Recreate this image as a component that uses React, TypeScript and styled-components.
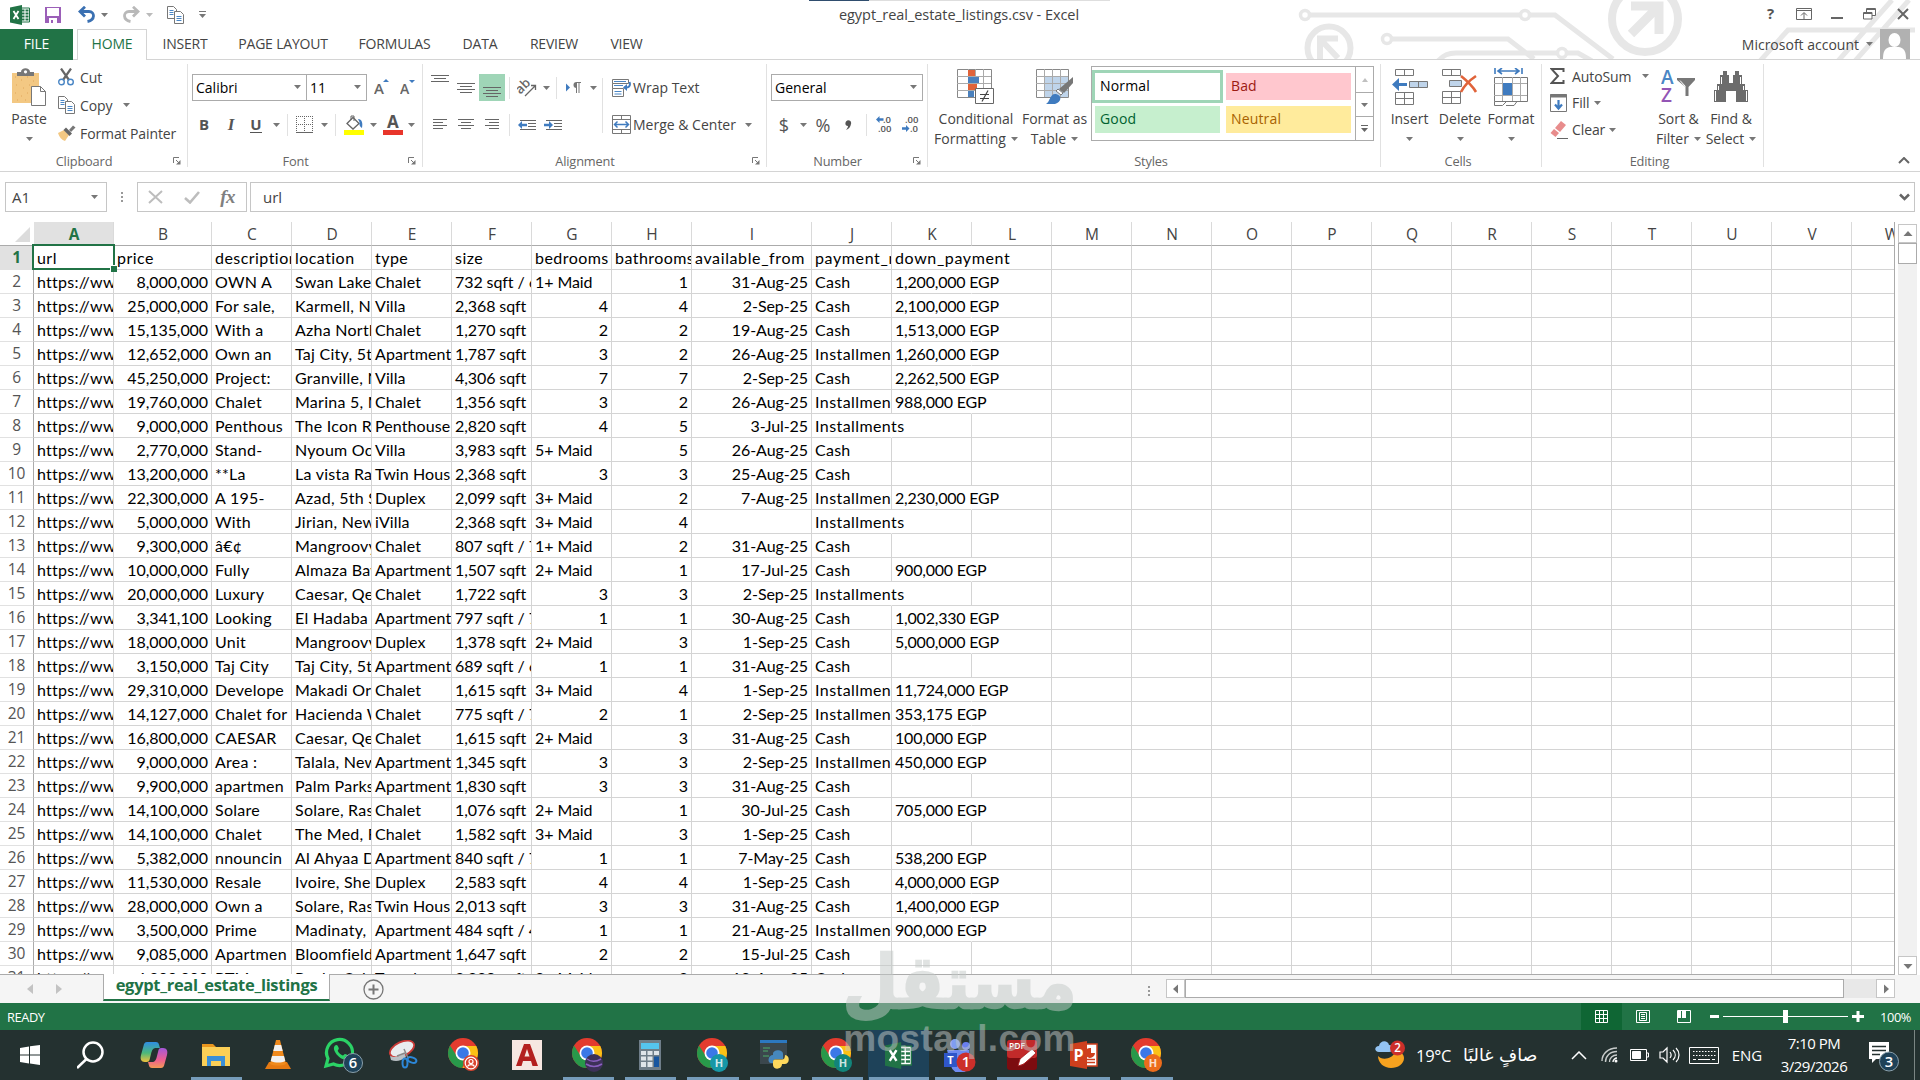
import { ReactNode } from 'react';
import styled, { createGlobalStyle } from 'styled-components';

const GlobalStyle = createGlobalStyle`
  * {
    box-sizing: border-box;
  }
  body {
    margin: 0;
    background: #fff;
    font-family: 'Open Sans', 'Noto Sans', sans-serif;
    font-size: 14px;
    color: #444;
    overflow: hidden;
  }
  svg {
    display: block;
    flex: none;
  }
`;

const Window = styled.div`
  position: relative;
  width: 1920px;
  height: 1080px;
  display: flex;
  flex-direction: column;
  overflow: hidden;
  background: #fff;
`;

/* ---------- title bar and tabs ---------- */

const Header = styled.header`
  position: relative;
  height: 60px;
  flex: none;
  display: flex;
  flex-direction: column;
  border-bottom: 1px solid #d4d4d4;
`;
const Circuit = styled.svg`
  position: absolute;
  right: 0;
  top: 0;
`;
const TopStrip = styled.div`
  position: absolute;
  left: 809px;
  top: 0;
  width: 301px;
  height: 1px;
  background: linear-gradient(90deg, #2f4d6e 60px, #dedede 60px);
`;
const TitleBar = styled.div`
  position: relative;
  height: 29px;
  display: flex;
  align-items: center;
  padding-left: 8px;
`;
const Title = styled.div`
  width: 300px;
  margin-left: 597px;
  text-align: center;
  font-size: 14.5px;
  line-height: 29px;
  letter-spacing: -0.05px;
`;
const WindowButtons = styled.div`
  display: flex;
  align-items: center;
  margin-left: auto;
  padding: 0 1px 2px 0;
`;
const Slot = styled.div<{ $w: number; $bg?: string }>`
  width: ${props => props.$w}px;
  height: 100%;
  flex: none;
  display: flex;
  align-items: center;
  justify-content: center;
  background: ${props => props.$bg || 'transparent'};
`;
const TabBar = styled.nav`
  position: relative;
  height: 31px;
  display: flex;
`;
const FileTab = styled.div`
  width: 73px;
  height: 31px;
  line-height: 30px;
  background: #217346;
  color: #fff;
  text-align: center;
  letter-spacing: -0.2px;
`;
const Tab = styled.div<{ $w: number; $active?: boolean }>`
  width: ${props => props.$w}px;
  height: 31px;
  line-height: 28px;
  text-align: center;
  letter-spacing: -0.2px;
  color: ${props => (props.$active ? '#217346' : '#444')};
  background: ${props => (props.$active ? '#fff' : 'transparent')};
  border: ${props => (props.$active ? '1px solid #d4d4d4' : '1px solid transparent')};
  border-bottom: 0;
  margin-left: ${props => (props.$active ? '4px' : '0')};
`;
const Account = styled.div`
  margin-left: auto;
  display: flex;
  align-items: center;
  gap: 7px;
  padding: 0 10px 1px 0;
`;

/* ---------- ribbon ---------- */

const Ribbon = styled.section`
  height: 112px;
  flex: none;
  display: flex;
  padding: 4px 0;
  border-bottom: 1px solid #d4d4d4;
`;
const Group = styled.div<{ $w: number }>`
  width: ${props => props.$w}px;
  height: 103px;
  flex: none;
  display: flex;
  flex-direction: column;
  border-right: 1px solid #e1e1e1;
`;
const GroupBody = styled.div<{ $left?: number }>`
  height: 91px;
  display: flex;
  padding-left: ${props => props.$left || 0}px;
`;
const GroupFooter = styled.div`
  height: 12px;
  display: flex;
  align-items: center;
  gap: 5px;
  padding-right: 6px;
  font-size: 12.8px;
  line-height: 13px;
  color: #666;
`;
const GroupName = styled.span`
  flex: 1;
  text-align: center;
  letter-spacing: -0.15px;
`;
const BigButton = styled.div<{ $w: number }>`
  width: ${props => props.$w}px;
  flex: none;
  display: flex;
  flex-direction: column;
  align-items: center;
  line-height: 20px;
  white-space: nowrap;
`;
const BigIcon = styled.div`
  height: 45px;
  display: flex;
  align-items: center;
`;
const BigLine = styled.div`
  height: 20px;
  display: flex;
  align-items: center;
  gap: 5px;
`;
const SmallColumn = styled.div<{ $w: number }>`
  width: ${props => props.$w}px;
  flex: none;
`;
const SmallButton = styled.div<{ $h: number }>`
  height: ${props => props.$h}px;
  display: flex;
  align-items: center;
  padding-bottom: 2px;
  white-space: nowrap;
  letter-spacing: -0.1px;
`;
const SmallIcon = styled.div`
  width: 22px;
  flex: none;
`;
const CaretBox = styled.div<{ $ml: number }>`
  margin-left: ${props => props.$ml}px;
`;
const Rows = styled.div`
  display: flex;
  flex-direction: column;
  gap: 10px;
  padding-top: 10px;
`;
const Row = styled.div`
  height: 27px;
  display: flex;
  align-items: center;
  white-space: nowrap;
`;
const Combo = styled.div<{ $w: number }>`
  width: ${props => props.$w}px;
  height: 27px;
  flex: none;
  display: flex;
  align-items: center;
  justify-content: space-between;
  padding: 0 5px 1px 3px;
  border: 1px solid #ababab;
  color: #000;
  & + & {
    margin-left: -1px;
  }
`;
const Line = styled.div`
  width: 1px;
  height: 22px;
  flex: none;
  background: #e1e1e1;
`;
const TallLine = styled.div`
  width: 1px;
  height: 55px;
  flex: none;
  margin: 14px 6px 0 7px;
  background: #e1e1e1;
`;
const Glyph = styled.span<{ $size: number; $italic?: boolean; $underline?: boolean }>`
  font-size: ${props => props.$size}px;
  font-weight: 700;
  line-height: 1;
  color: #555;
  font-style: ${props => (props.$italic ? 'italic' : 'normal')};
  font-family: ${props =>
    props.$italic ? "'Liberation Serif', serif" : "'Open Sans', sans-serif"};
  border-bottom: ${props => (props.$underline ? '1px solid #555' : '0')};
`;
const Sign = styled.span<{ $size: number }>`
  font-size: ${props => props.$size}px;
  line-height: 1;
  color: #555;
`;
const Gallery = styled.div`
  width: 283px;
  height: 75px;
  margin-top: 2px;
  display: flex;
  border: 1px solid #ababab;
`;
const Swatches = styled.div`
  width: 263px;
  display: grid;
  grid-template-columns: 125px 125px;
  grid-template-rows: 27px 27px;
  gap: 6px;
  padding: 6px 0 0 3px;
`;
const Swatch = styled.div<{ $bg: string; $fg: string; $on?: boolean }>`
  background: ${props => props.$bg};
  color: ${props => props.$fg};
  box-shadow: ${props => (props.$on ? '0 0 0 3px #9fd5b7' : 'none')};
  padding-left: 5px;
  line-height: 26px;
  letter-spacing: 0.15px;
`;
const GalleryButtons = styled.div`
  width: 18px;
  display: flex;
  flex-direction: column;
  border-left: 1px solid #ababab;
`;
const GalleryButton = styled.div<{ $h: number }>`
  height: ${props => props.$h}px;
  display: flex;
  align-items: center;
  justify-content: center;
  & + & {
    border-top: 1px solid #ababab;
  }
`;
const Collapse = styled.div`
  margin-left: auto;
  align-self: flex-end;
  padding: 0 10px 3px 0;
`;

/* ---------- formula bar ---------- */

const FormulaBar = styled.section`
  height: 50px;
  flex: none;
  display: flex;
  align-items: flex-start;
  padding: 10px 5px 0;
  font-size: 15px;
`;
const Box = styled.div<{ $w?: number }>`
  width: ${props => (props.$w ? `${props.$w}px` : 'auto')};
  flex: ${props => (props.$w ? 'none' : 1)};
  height: 30px;
  display: flex;
  align-items: center;
  justify-content: space-between;
  border: 1px solid #c6c6c6;
  padding: 0 8px 1px 6px;
`;
const FormulaButtons = styled(Box)`
  padding: 0 11px 0 10px;
`;
const FormulaInput = styled(Box)`
  margin-left: 3px;
  padding: 0 4px 1px 12px;
`;
const Dots = styled.div`
  width: 30px;
  height: 30px;
  display: flex;
  align-items: center;
  justify-content: center;
`;
const Fx = styled.span`
  font: italic 700 19px 'Liberation Serif', serif;
  color: #808080;
  letter-spacing: -0.5px;
`;

/* ---------- sheet ---------- */

const SheetArea = styled.section`
  height: 753px;
  flex: none;
  display: flex;
  background: #fff;
`;
const Sheet = styled.div`
  width: 1895px;
  height: 753px;
  overflow: hidden;
  border-right: 1px solid #ababab;
  border-bottom: 1px solid #ababab;
`;
const SheetRow = styled.div`
  width: 1960px;
  height: 24px;
  display: flex;
`;
const Corner = styled.div`
  width: 34px;
  height: 24px;
  flex: none;
  display: flex;
  align-items: flex-end;
  justify-content: flex-end;
  padding: 0 4px 3px 0;
  border-bottom: 1px solid #ababab;
`;
const ColumnName = styled.div<{ $w: number; $on?: boolean }>`
  width: ${props => props.$w}px;
  height: 24px;
  flex: none;
  padding-left: 1px;
  text-align: center;
  font-size: 15.5px;
  line-height: 24px;
  font-weight: ${props => (props.$on ? 700 : 400)};
  color: ${props => (props.$on ? '#217346' : '#444')};
  background: ${props => (props.$on ? '#e1e1e1' : '#fff')};
  border-right: 1px solid #dadada;
  border-bottom: 1px solid #ababab;
`;
const RowNumber = styled.div<{ $on?: boolean }>`
  width: 34px;
  height: 24px;
  flex: none;
  text-align: center;
  font-size: 15.5px;
  line-height: 23px;
  letter-spacing: -0.2px;
  font-weight: ${props => (props.$on ? 700 : 400)};
  color: ${props => (props.$on ? '#217346' : '#555')};
  background: ${props => (props.$on ? '#e1e1e1' : '#fff')};
  border-right: 1px solid #ababab;
  border-bottom: 1px solid #e1e1e1;
`;
const Cell = styled.div<{ $w: number; $track: number; $right?: boolean; $spill?: boolean }>`
  width: ${props => props.$w}px;
  height: 24px;
  flex: none;
  padding: 0 3px;
  font-family: Lato, 'Open Sans', sans-serif;
  font-size: 16px;
  line-height: 24px;
  letter-spacing: ${props => props.$track}px;
  color: #000;
  white-space: pre;
  text-align: ${props => (props.$right ? 'right' : 'left')};
  overflow: ${props => (props.$spill ? 'visible' : 'hidden')};
  border-right: 1px solid ${props => (props.$spill ? 'transparent' : '#d4d4d4')};
  border-bottom: 1px solid #d4d4d4;
`;
const Selection = styled.div`
  position: absolute;
  left: 32px;
  top: 244px;
  width: 83px;
  height: 26px;
  border: 2px solid #217346;
  &::after {
    content: '';
    position: absolute;
    right: -4px;
    bottom: -4px;
    width: 6px;
    height: 6px;
    background: #217346;
    border: 1px solid #fff;
    border-right: 0;
    border-bottom: 0;
  }
`;
const VScroll = styled.div`
  width: 19px;
  height: 751px;
  margin: 2px 0 0 3px;
  display: flex;
  flex-direction: column;
  background: #f1f1f1;
`;
const ScrollButton = styled.div`
  width: 19px;
  height: 19px;
  flex: none;
  display: flex;
  align-items: center;
  justify-content: center;
  background: #fff;
  border: 1px solid #c6c6c6;
`;
const VThumb = styled.div`
  height: 21px;
  margin-bottom: auto;
  background: #fff;
  border: 1px solid #ababab;
`;

const SheetTabs = styled.section`
  height: 28px;
  flex: none;
  display: flex;
  background: #f5f5f5;
`;
const SheetNav = styled.div`
  width: 103px;
  display: flex;
  align-items: center;
  gap: 23px;
  padding-left: 27px;
`;
const SheetTab = styled.div`
  width: 227px;
  height: 27px;
  margin-top: -1px;
  background: #fff;
  border: 1px solid #ababab;
  border-top: 0;
  border-bottom: 2px solid #217346;
  color: #217346;
  font-size: 16.5px;
  font-weight: 700;
  line-height: 22px;
  text-align: center;
  letter-spacing: -0.3px;
`;
const AddSheet = styled.div`
  padding: 4px 0 0 33px;
`;
const HScroll = styled.div`
  margin-left: auto;
  padding: 4px 25px 0 0;
  display: flex;
`;
const HThumb = styled.div`
  width: 659px;
  height: 19px;
  background: #fff;
  border: 1px solid #ababab;
`;
const HTrack = styled.div`
  width: 32px;
  height: 19px;
  background: #e8e8e8;
`;

/* ---------- status bar ---------- */

const StatusBar = styled.footer`
  height: 27px;
  flex: none;
  display: flex;
  align-items: center;
  padding: 0 9px 0 7px;
  background: #217346;
  color: #fff;
  font-size: 12.8px;
  letter-spacing: -0.4px;
`;
const StatusTools = styled.div`
  height: 27px;
  display: flex;
  align-items: center;
  margin-left: auto;
`;
const ZoomValue = styled.span`
  width: 47px;
  text-align: right;
`;

/* ---------- taskbar ---------- */

const Taskbar = styled.footer`
  height: 50px;
  flex: none;
  display: flex;
  background: #243130;
  color: #fff;
`;
const TaskItem = styled.div<{ $w?: number; $active?: boolean; $running?: boolean }>`
  width: ${props => props.$w || 62}px;
  height: 50px;
  flex: none;
  display: flex;
  align-items: center;
  justify-content: center;
  background: ${props =>
    props.$active ? 'linear-gradient(#1e4259, #1e4259) center / 61px 50px no-repeat' : 'none'};
  position: relative;
  &::after {
    content: '';
    display: ${props => (props.$running ? 'block' : 'none')};
    position: absolute;
    bottom: 0;
    left: ${props => (props.$active ? 1 : 6)}px;
    right: ${props => (props.$active ? 0 : 5)}px;
    height: 3px;
    background: #769cba;
  }
`;
const Tray = styled.div`
  margin-left: auto;
  display: flex;
  align-items: center;
  font-size: 15px;
`;
const Weather = styled.div`
  display: flex;
  align-items: center;
  width: 184px;
  white-space: nowrap;
`;
const Temperature = styled.span`
  width: 47px;
  margin-left: 10px;
  font-size: 16.5px;
  letter-spacing: -0.3px;
`;
const Condition = styled.span`
  font-family: 'DejaVu Sans', sans-serif;
  font-size: 17.5px;
  line-height: 24px;
`;
const Clock = styled.div`
  width: 100px;
  text-align: center;
  font-size: 15px;
  line-height: 23px;
  letter-spacing: -0.5px;
`;
const Notifications = styled.div`
  width: 50px;
  padding: 4px 0 0 4px;
`;
const ShowDesktop = styled.div`
  width: 6px;
  height: 50px;
  border-left: 1px solid #7b8583;
`;

const Watermark = styled.div`
  position: absolute;
  left: 845px;
  top: 946px;
  width: 229px;
  height: 110px;
  display: flex;
  flex-direction: column;
  align-items: center;
  color: #c3c9c7;
  opacity: 0.5;
`;
const WatermarkName = styled.div`
  font: 700 64px/74px 'DejaVu Sans', sans-serif;
  white-space: nowrap;
  transform: scale(1, 1.15);
  -webkit-text-stroke: 2px #c3c9c7;
`;
const WatermarkHost = styled.div`
  font: 700 37px/38px 'Liberation Sans', sans-serif;
  letter-spacing: 0.4px;
`;

/* ---------- icons ---------- */

const Caret = ({ color = '#777' }: { color?: string }) => (
  <svg width="7" height="4" viewBox="0 0 7 4">
    <path d="M0 0h7L3.500 4z" fill={color} />
  </svg>
);
const Triangle = ({ dir, color = '#777' }: { dir: number; color?: string }) => (
  <svg width="10" height="10" viewBox="0 0 10 10">
    <path d="M0.500 7h9L5 2z" fill={color} transform={`rotate(${dir} 5 5)`} />
  </svg>
);
const Launcher = () => (
  <svg width="8" height="8" viewBox="0 0 8 8" fill="none" stroke="#777">
    <path d="M0.500 6V0.500H6M3 3l3 3" />
    <path d="M7.500 3v4.500H3z" fill="#777" stroke="none" />
  </svg>
);
const Lines = ({ rows, w = 18, h = 18 }: { rows: number[][]; w?: number; h?: number }) => (
  <svg width={w} height={h} viewBox={`0 0 ${w} ${h}`} fill="#666">
    {rows.map(([x, y, len]) => (
      <rect key={y} x={x} y={y} width={len} height="1" />
    ))}
  </svg>
);
const ExcelIcon = ({ size = 20 }: { size?: number }) => (
  <svg width={size} height={size} viewBox="0 0 20 20">
    <path d="M10 3h9.500v14H10z" fill="#fff" stroke="#217346" />
    <path d="M12 5.500h2.500M15.500 5.500h3M12 8.500h2.500M15.500 8.500h3M12 11.500h2.500M15.500 11.500h3M12 14.500h2.500M15.500 14.500h3" stroke="#217346" strokeWidth="1.800" />
    <path d="M0 2.500 12 0v20L0 17.500z" fill="#217346" />
    <path d="M3.500 6 8.500 14M8.500 6l-5 8" stroke="#fff" strokeWidth="1.800" />
  </svg>
);
const SaveIcon = () => (
  <svg width="16" height="16" viewBox="0 0 16 16">
    <path d="M0 0h16v16H0z" fill="#9b5fb8" />
    <path d="M2 1h12v8H2zM4 11h8v5H4z" fill="#fff" />
    <path d="M6 13h2v3H6z" fill="#9b5fb8" />
  </svg>
);
const UndoIcon = ({ color, flip }: { color: string; flip?: boolean }) => (
  <svg width="18" height="17" viewBox="0 0 18 17" fill="none" stroke={color} strokeWidth="2.800">
    <g transform={flip ? 'translate(18 0) scale(-1 1)' : undefined}>
      <path d="M2 5.500h9c6 0 6.500 8.500-1.500 10" />
      <path d="M7 0.800 2 5.500l5 5" />
    </g>
  </svg>
);
const CopyIcon = () => (
  <svg width="17" height="18" viewBox="0 0 17 18" fill="#fff" stroke="#777">
    <path d="M0.500 0.500h6l3 3v9h-9z" />
    <path d="M2.500 4.500h4M2.500 6.500h4M2.500 8.500h4" stroke="#4a86c5" />
    <path d="M7.500 5.500h6l3 3v9h-9z" />
    <path d="M9.500 10.500h5M9.500 12.500h5M9.500 14.500h5" stroke="#4a86c5" />
  </svg>
);
const PasteIcon = () => (
  <svg width="34" height="38" viewBox="0 0 34 38">
    <path d="M0 5h27v30H0z" fill="#f3c883" />
    <path d="M3 9h1M9 12h1M15 9h1M21 13h1M4 17h1M11 20h1M17 17h1M3 25h1M9 28h1M15 25h1M5 32h1M13 32h1" stroke="#e0a65a" />
    <path d="M5 8V4h4c0-5 9-5 9 0h4v4z" fill="#777" />
    <circle cx="13.500" cy="3.800" r="1.600" fill="#fff" />
    <path d="M19.500 18.500h9l5 5v14h-14z" fill="#fff" stroke="#777" />
    <path d="M28.500 18.500v5h5" fill="none" stroke="#777" />
  </svg>
);
const CutIcon = () => (
  <svg width="16" height="18" viewBox="0 0 16 18" fill="none">
    <path d="M3 0.500 11 12M13 0.500 5 12" stroke="#666" strokeWidth="2.200" />
    <circle cx="3.500" cy="14" r="2.800" stroke="#4a86c5" strokeWidth="1.400" />
    <circle cx="12.500" cy="14" r="2.800" stroke="#4a86c5" strokeWidth="1.400" />
  </svg>
);
const PainterIcon = () => (
  <svg width="18" height="16" viewBox="0 0 18 16">
    <path d="M0 8 6 5l5 5-4 6c-3-1-6-4-7-8z" fill="#f3c883" />
    <path d="M5.500 5 8 2.500l6 6L11.500 11z" fill="#666" />
    <path d="m11 5 4-4.500 2.500 2L13 7z" fill="#777" />
  </svg>
);
const GrowFont = ({ down }: { down?: boolean }) => (
  <svg width="16" height="20" viewBox="0 0 16 20">
    <text x="0" y="16" fontSize={down ? 14 : 15} fontWeight="600" fill="#666" fontFamily="Open Sans">
      A
    </text>
    <path d={down ? 'M9 2h6l-3 3z' : 'M9 4h6l-3-3z'} fill="#3f7bbf" />
  </svg>
);
const BordersIcon = () => (
  <svg width="17" height="17" viewBox="0 0 17 17" fill="none" stroke="#666">
    <path d="M0.500 0v16M16.500 0v16M8.500 0v16M0 0.500h16M0 8.500h16" strokeDasharray="1 1" />
    <path d="M0 16.500h17" />
  </svg>
);
const FillColorIcon = () => (
  <svg width="20" height="20" viewBox="0 0 20 20">
    <path d="m3 8.500 6-6 6 6-6 5.500z" fill="#fff" stroke="#666" strokeWidth="1.300" />
    <path d="M7 5V1h3v5" fill="none" stroke="#666" />
    <path d="M14 4c4 0 5 4 4 9-2-1-3-3-2.500-6z" fill="#3f7bbf" />
    <path d="M0 15h20v5H0z" fill="#ff0" />
  </svg>
);
const FontColorIcon = () => (
  <svg width="20" height="20" viewBox="0 0 20 20">
    <text x="4" y="13" fontSize="17" fontWeight="700" fill="#555" fontFamily="Open Sans">
      A
    </text>
    <path d="M0 15h20v5H0z" fill="#e8352b" />
  </svg>
);
const OrientationIcon = () => (
  <svg width="20" height="20" viewBox="0 0 20 20">
    <text x="0" y="13" fontSize="13" fontWeight="600" fill="#666" fontFamily="Open Sans" transform="rotate(-45 6 11)">
      ab
    </text>
    <path d="M8 18 18 8M14 7.500h4.500V12" fill="none" stroke="#666" strokeWidth="1.300" />
  </svg>
);
const DirectionIcon = () => (
  <svg width="16" height="12" viewBox="0 0 16 12">
    <path d="M0 1.500v8l4-4z" fill="#3f7bbf" />
    <path d="M15 0.500H10.500M10.500 0v11M13 0v11" stroke="#777" fill="none" />
    <path d="M10.500 0a3 3 0 0 0 0 6z" fill="#777" />
  </svg>
);
const IndentIcon = ({ out }: { out?: boolean }) => (
  <svg width="19" height="12" viewBox="0 0 19 12">
    <path d="M2 1.500h16M10 4.500h8M10 7.500h8M2 10.500h16" stroke="#666" />
    <path d={out ? 'M0 6l4-4v2.800h5v2.400H4V10z' : 'M9 6 5 2v2.800H0v2.400h5V10z'} fill="#3f7bbf" />
  </svg>
);
const WrapIcon = () => (
  <svg width="19" height="18" viewBox="0 0 19 18" fill="none" stroke="#777">
    <path d="M0.500 0.500h16v4H0.500zM0.500 9.500h11v8H0.500zM0.500 4.500v5" />
    <path d="M2 6.500h9M2 2.500h12M2.500 12.500h7M2.500 15h7" stroke="#4a86c5" />
    <path d="M17.500 3c1.500 4-1 6-5 5.500" stroke="#3f7bbf" strokeWidth="2" />
    <path d="M11 8.500 15 5v7z" fill="#3f7bbf" stroke="none" />
  </svg>
);
const MergeIcon = () => (
  <svg width="19" height="19" viewBox="0 0 19 19" fill="none" stroke="#777">
    <path d="M0.500 0.500h18v18H0.500zM0.500 4.500h18M0.500 14.500h18M9.500 0.500v4M9.500 14.500v4" />
    <path d="M2.500 9.500h14M5.500 6.500l-3 3 3 3M13.500 6.500l3 3-3 3" stroke="#3f7bbf" strokeWidth="1.500" />
  </svg>
);
const DecimalIcon = ({ less }: { less?: boolean }) => (
  <svg width="17" height="19" viewBox="0 0 17 19" fontSize="9.500" fontFamily="Open Sans" fontWeight="600">
    <text x={less ? 3 : 7} y="8" fill="#555">
      {less ? '.00' : '.0'}
    </text>
    <text x={less ? 8 : 2} y="17" fill="#555">
      {less ? '.0' : '.00'}
    </text>
    <path
      d={less ? 'M7.500 13.500 4 10v2.300H0v2.400h4V17z' : 'M0 4.500 3.500 1v2.300h4v2.400h-4V8z'}
      fill="#3f7bbf"
    />
  </svg>
);
const ConditionalIcon = () => (
  <svg width="38" height="36" viewBox="0 0 38 36">
    <path d="M0.500 0.500h34v28h-34z" fill="#fff" stroke="#888" />
    <path d="M0 7.500h34M0 14.500h34M0 21.500h34M11.500 0v28M18.500 0v28M26.500 0v28" stroke="#aaa" />
    <path d="M11 1h7v6h-7zM11 15h9v6h-9z" fill="#e0633a" />
    <path d="M11 8h11v6H11zM11 22h6v6h-6z" fill="#4a80bd" />
    <path d="M18.500 19.500h18v15h-18z" fill="#fff" stroke="#666" />
    <path d="M23 25.500h9M23 29.500h9M31 21.500l-6 11" stroke="#444" strokeWidth="1.200" />
  </svg>
);
const TableIcon = () => (
  <svg width="38" height="36" viewBox="0 0 38 36">
    <path d="M0.500 0.500h32v28h-32z" fill="#fff" stroke="#888" />
    <path d="M9 8h23v20H9z" fill="#bfd4ea" />
    <path d="M0 7.500h32M0 14.500h32M0 21.500h32M8.500 0v28M16.500 0v28M24.500 0v28" stroke="#aaa" />
    <path d="M37 8v6l-9 10-5-4z" fill="#777" />
    <path d="M22 20l5 4-2 2-5-4z" fill="#fff" stroke="#777" />
    <path d="M10 35c4-2 4-11 10-10 6 1 6 8-1 10z" fill="#3f7bbf" />
  </svg>
);
const InsertIcon = () => (
  <svg width="36" height="36" viewBox="0 0 36 36" fill="#fff" stroke="#777">
    <path d="M3.500 0.500h18v6h-18zM12.500 0.500v6M3.500 23.500h18v12h-18zM12.500 23.500v12M3.500 29.500h18" />
    <path d="M17.500 12.500h18v6h-18zM26.500 12.500v6" fill="#bfd4ea" />
    <path d="M0 15.500 7 9v5h8v3H7v5z" fill="#3f7bbf" stroke="none" />
  </svg>
);
const DeleteIcon = () => (
  <svg width="36" height="36" viewBox="0 0 36 36" fill="#fff" stroke="#777">
    <path d="M0.500 0.500h18v6h-18zM9.500 0.500v6M0.500 22.500h18v12h-18zM9.500 22.500v12M0.500 28.500h18" />
    <path d="M7.500 11.500h12v6h-12z" fill="#bfd4ea" />
    <path d="M19 7c5 4 11 9 15 16M34 7c-6 4-12 10-15 16" fill="none" stroke="#e0633a" strokeWidth="2.600" />
  </svg>
);
const FormatIcon = () => (
  <svg width="34" height="38" viewBox="0 0 34 38" fill="none" stroke="#888">
    <path d="M1 0v6M28 0v6M4 3h21M8 0 4 3l4 3M21 0l4 3-4 3" stroke="#3f7bbf" strokeWidth="1.600" />
    <path d="M0.500 9.500h33v24h-33z" stroke="#777" />
    <path d="M0 15.500h33M0 27.500h33M8.500 9v24M18.500 9v24M26.500 9v24" stroke="#aaa" />
    <path d="M9 15h9v12H9z" fill="#3f7bbf" stroke="none" />
    <path d="M0.500 33.500v4h8l4-4M12 37.500h8l3-4" stroke="#777" />
  </svg>
);
const SigmaIcon = () => (
  <svg width="15" height="16" viewBox="0 0 15 16" fill="none" stroke="#555" strokeWidth="2">
    <path d="M13.500 4V1H1.500L8 8l-6.500 7h12v-3" />
  </svg>
);
const FillDownIcon = () => (
  <svg width="17" height="18" viewBox="0 0 17 18" fill="none" stroke="#777">
    <path d="M0.500 0.500h16v17H0.500z" />
    <path d="M0 2h17" strokeWidth="3" />
    <path d="M8.500 6v8M5 10.500l3.500 4 3.500-4" stroke="#3f7bbf" strokeWidth="2.200" />
  </svg>
);
const EraserIcon = () => (
  <svg width="18" height="18" viewBox="0 0 18 18">
    <path d="M5 7 11 0l5 4-6 7z" fill="#e88c8c" />
    <path d="m4 8 5 4-3.500 4L0.500 12z" fill="#e88c8c" />
    <path d="M7 17.500h11" stroke="#666" />
  </svg>
);
const SortIcon = () => (
  <svg width="35" height="34" viewBox="0 0 35 34" fontFamily="Open Sans" fontWeight="600" fontSize="19">
    <text x="0" y="14" fill="#4a86c5">
      A
    </text>
    <text x="0" y="32" fill="#9355b5">
      Z
    </text>
    <path d="M16 8h18v2l-6.500 7v9h-3v-9L16 10z" fill="#777" />
    <path d="M19 10.500l5.500 6" stroke="#fff" />
  </svg>
);
const BinocularsIcon = () => (
  <svg width="34" height="32" viewBox="0 0 34 32" fill="#6c6c6c">
    <path d="M9 0h4v4h2v8h4V4h2V0h4v4h3v9h3v6h3v12H22V20h-10v11H0V19h3v-6h3V4h3z" />
    <path d="M7.500 6v7M4.500 15v4M1.500 20v10M26.500 6v7M29.500 15v4M32.500 20v10" stroke="#fff" />
  </svg>
);

const Circle = ({ cx, cy }: { cx: number; cy: number }) => (
  <circle cx={cx} cy={cy} r="4.500" fill="#fff" strokeWidth="3.500" />
);
const CircuitArt = () => (
  <Circuit width="640" height="59" viewBox="1280 0 640 59" fill="none" stroke="#e7e7e7" strokeWidth="5">
    <path d="M1305 15h250l58 44M1387 39h121l26 20M1438 61c6-6 10-8 18-8h122l14 8" />
    <path d="M1760 61 1788 30h127M1838 61l54-61M1855 61l54-61" />
    <Circle cx={1305} cy={15} />
    <Circle cx={1525} cy={15} />
    <Circle cx={1387} cy={39} />
    <Circle cx={1562} cy={53} />
    <circle cx="1645" cy="19" r="33" fill="#fff" strokeWidth="8" />
    <path d="M1631 34 1658 7M1631 6h28v28" strokeWidth="9" />
    <circle cx="1329" cy="48" r="21.500" fill="#fff" strokeWidth="6" />
    <path d="M1338 58 1321 40M1320 60V38.500h18" strokeWidth="6" />
  </Circuit>
);

const ChromeIcon = ({ badge, letter }: { badge?: string; letter?: string }) => (
  <svg width="34" height="36" viewBox="0 0 34 36">
    <circle cx="16" cy="16" r="15" fill="#e33b2e" />
    <path d="M16 9h13.300A15 15 0 0 1 15.500 31L22 19.500z" fill="#fbc116" />
    <path d="M3 8.500 10 19.500c2 3.500 6 4.500 9 3L15 31A15 15 0 0 1 3 8.500z" fill="#28994a" />
    <circle cx="16" cy="16" r="7.500" fill="#fff" />
    <circle cx="16" cy="16" r="5.800" fill="#3b78e7" />
    {badge && <circle cx="23" cy="26" r="9" fill={badge} />}
    {letter && (
      <text x="23" y="30" fontSize="11" fontWeight="700" fill="#fff" fillOpacity="0.8" textAnchor="middle" fontFamily="Open Sans">
        {letter}
      </text>
    )}
    {badge && !letter && (
      <path d="M16 22c4 3 9 3 14 0M15 27c5 3 11 3 16 0" fill="none" stroke="#8a5fc0" strokeWidth="1.500" />
    )}
  </svg>
);
const ChromeProfileIcon = () => (
  <svg width="34" height="36" viewBox="0 0 34 36">
    <circle cx="16" cy="16" r="15" fill="#e33b2e" />
    <path d="M16 9h13.300A15 15 0 0 1 15.500 31L22 19.500z" fill="#fbc116" />
    <path d="M3 8.500 10 19.500c2 3.500 6 4.500 9 3L15 31A15 15 0 0 1 3 8.500z" fill="#28994a" />
    <circle cx="16" cy="16" r="7.500" fill="#fff" />
    <circle cx="16" cy="16" r="5.800" fill="#3b78e7" />
    <circle cx="24" cy="26" r="8" fill="#d9432f" />
    <circle cx="24" cy="26" r="5.800" fill="none" stroke="#fff" strokeWidth="1.200" />
    <circle cx="24" cy="24.500" r="2" fill="none" stroke="#fff" strokeWidth="1.200" />
    <path d="M20.500 29.500c1-2.500 6-2.500 7 0" fill="none" stroke="#fff" strokeWidth="1.200" />
  </svg>
);
const Badge = ({ cx, cy, r, text, fill }: { cx: number; cy: number; r: number; text: string; fill: string }) => (
  <>
    <circle cx={cx} cy={cy} r={r} fill={fill} stroke={fill === '#1f4258' ? '#8aa0ac' : 'none'} />
    <text x={cx} y={cy + r * 0.55} fontSize={r * 1.55} fontWeight="600" fill="#fff" textAnchor="middle" fontFamily="Open Sans">
      {text}
    </text>
  </>
);
const StartIcon = () => (
  <svg width="20" height="20" viewBox="0 0 20 20" fill="#fff">
    <path d="M0 3l9-1.500v8H0zM10 1.300 20 0v9.500H10zM0 10.500h9v8L0 17zM10 10.500h10V20l-10-1.500z" />
  </svg>
);
const SearchIcon = () => (
  <svg width="28" height="28" viewBox="0 0 28 28" fill="none" stroke="#fff" strokeWidth="2.500">
    <circle cx="16" cy="11" r="9.500" />
    <path d="M9.500 18 0 27" />
  </svg>
);
const CopilotIcon = () => (
  <svg width="28" height="26" viewBox="0 0 28 26">
    <defs>
      <linearGradient id="cp1" x1="0" y1="0" x2="0" y2="1">
        <stop offset="0" stopColor="#2f8de4" />
        <stop offset="0.550" stopColor="#4cb87a" />
        <stop offset="1" stopColor="#f0c23c" />
      </linearGradient>
      <linearGradient id="cp2" x1="0" y1="0" x2="0" y2="1">
        <stop offset="0" stopColor="#a357d8" />
        <stop offset="0.600" stopColor="#ee5f8f" />
        <stop offset="1" stopColor="#f39a55" />
      </linearGradient>
    </defs>
    <path d="M7 0h9c3 0 3 3 4 6h-4c-3 0-4 2-5 6l-1.500 6C9 20 7 20 5 20c-4 0-5-3-4-7L3.500 4C4 1.500 5 0 7 0z" fill="url(#cp1)" />
    <path d="M21 26h-9c-3 0-3-3-4-6h4c3 0 4-2 5-6l1.500-6C19 6 21 6 23 6c4 0 5 3 4 7l-2.500 9c-.5 2.500-1.500 4-3.500 4z" fill="url(#cp2)" />
  </svg>
);
const ExplorerIcon = () => (
  <svg width="28" height="24" viewBox="0 0 28 24">
    <path d="M0 1h11l3 3H0z" fill="#e8961e" />
    <path d="M0 4h28v19H0z" fill="#fbcf56" />
    <path d="M5 13h18v10h-4v-5H9v5H5z" fill="#3b8fd6" />
  </svg>
);
const VlcIcon = () => (
  <svg width="26" height="30" viewBox="0 0 26 30">
    <path d="M4 22h18l4 7H0z" fill="#e67a12" />
    <path d="M11 0h4l6 24c-4 2-12 2-16 0z" fill="#f08a1c" />
    <path d="M9.800 5h6.400l1.500 6H8.300zM7 16h12l1.300 5c-4 2-10 2-14.600 0z" fill="#f1f1f1" />
  </svg>
);
const WhatsappIcon = () => (
  <svg width="44" height="38" viewBox="0 0 44 38">
    <path d="M6 30l2-7.500A13 13 0 1 1 13.500 28z" fill="none" stroke="#2bd366" strokeWidth="3.200" />
    <path d="M15 9.500c2-1.500 3 0 3.800 2.700.4 1.300-1.500 2-1 2.800 1 2 3 4 5 4.500.8.200 1.500-1.700 2.400-1.400 2 .7 3.800 1.500 3 3-1.400 3.400-6 2.600-9-.1-4-3.500-7-8.500-4.200-11.500z" fill="#2bd366" />
    <Badge cx={33} cy={27} r={9.500} text="6" fill="#1f4258" />
  </svg>
);
const SnipIcon = () => (
  <svg width="30" height="30" viewBox="0 0 30 30" fill="none">
    <ellipse cx="14" cy="9" rx="13" ry="7" transform="rotate(-25 14 9)" fill="#e9ecee" stroke="#c83a36" strokeWidth="1.800" />
    <path d="M2 16c5 2 9 1 14-3l2 4c-5 4-10 5-15 3z" fill="#b9c0c4" />
    <path d="M17 13 9 16M16 9l4 9" stroke="#888" strokeWidth="1.500" />
    <ellipse cx="17" cy="23" rx="2.500" ry="4.500" stroke="#2c87d8" strokeWidth="2" />
    <ellipse cx="24" cy="20" rx="4.500" ry="2.500" stroke="#2c87d8" strokeWidth="2" transform="rotate(20 24 20)" />
  </svg>
);
const AcadIcon = () => (
  <svg width="30" height="30" viewBox="0 0 30 30">
    <path d="M0 0h30v30H0z" fill="#f6e7e1" />
    <path d="M4 26 12 4h6l8 22h-5.500l-1.500-5h-8l-1.500 5zM12.500 16.500h5L15 9z" fill="#b3201f" fillRule="evenodd" />
  </svg>
);
const CalcIcon = () => (
  <svg width="22" height="30" viewBox="0 0 22 30">
    <path d="M0 0h22v30H0z" fill="#6f7e89" />
    <path d="M2 3h18v6H2z" fill="#55c4ee" />
    <path d="M2 11h5v4H2zM8.500 11h5v4h-5zM15 11h5v4h-5zM2 16.500h5v4H2zM8.500 16.500h5v4h-5zM2 22h5v5H2zM8.500 22h5v5h-5z" fill="#dfe5e9" />
    <path d="M15 16.500h5V27h-5z" fill="#1756a0" />
  </svg>
);
const PythonIcon = () => (
  <svg width="30" height="30" viewBox="0 0 30 30">
    <path d="M0 0h27v24H0z" fill="#3b474d" />
    <path d="M0 0h27v3H0z" fill="#2c78c0" />
    <path d="M3 8h7M3 11h5M3 16h6" stroke="#4fae6a" />
    <path d="M13 14c0-5 10-5 10 0v5h-7c-2 0-3 1-3 4h-2c-4 0-3-8 2-8z" fill="#4687bd" />
    <path d="M25 15c5 0 5 9 0 9h-3c0 6-9 6-9 1v-3c0-2 1-2.500 3-2.500h6c2 0 3-1.500 3-4.500z" fill="#fdd85d" />
  </svg>
);
const TeamsIcon = () => (
  <svg width="34" height="34" viewBox="0 0 34 34">
    <circle cx="12" cy="6" r="5" fill="#7f9df2" />
    <circle cx="23" cy="8" r="4" fill="#6a7ff0" />
    <path d="M4 12h22v12a9 9 0 0 1-18 4z" fill="#6f8bf0" />
    <path d="M1 15h13v14H1z" fill="#2f56c9" />
    <Badge cx={23} cy={24} r={9.500} text="1" fill="#cc2f2a" />
    <text x="7.500" y="26" fontSize="11" fontWeight="700" fill="#fff" textAnchor="middle" fontFamily="Open Sans">
      T
    </text>
  </svg>
);
const PdfIcon = () => (
  <svg width="30" height="30" viewBox="0 0 30 30">
    <rect width="30" height="30" rx="3" fill="#7c0c10" />
    <rect width="30" height="18" rx="3" fill="#c22a2a" />
    <text x="2" y="9" fontSize="8.500" fontWeight="600" fill="#fff" fontFamily="Open Sans">
      PDF
    </text>
    <path d="M11 26l2-7 12-10 4 4-12 11zM14 26l13-10" fill="#fff" stroke="#a51518" strokeWidth="0.800" />
  </svg>
);
const PowerpointIcon = () => (
  <svg width="28" height="28" viewBox="0 0 28 28">
    <path d="M14 3h13v22H14z" fill="#fff" stroke="#cf3f1d" strokeWidth="1.500" />
    <path d="M21 7v5h4a5 5 0 1 1-4-5z" fill="#cf3f1d" />
    <path d="M17 18.500h8M17 21.500h8" stroke="#cf3f1d" strokeWidth="1.500" />
    <path d="M0 3 17 0v28L0 25z" fill="#cf3f1d" />
    <text x="8.500" y="20" fontSize="16" fontWeight="700" fill="#fff" textAnchor="middle" fontFamily="Open Sans">
      P
    </text>
  </svg>
);
const WeatherIcon = () => (
  <svg width="31" height="30" viewBox="0 0 31 30">
    <path d="M3 16c3 4 14 4 17-4 5-1 9 2 9 6 0 6-6 10-13 10S3 23 3 16z" fill="#f6a21f" />
    <path d="M4 12c-5 0-5-6 0-6 1-6 9-6 10-1 5 0 5 7 0 7z" fill="#93c4f3" />
    <Badge cx={22.5} cy={8} r={7.500} text="2" fill="#cc2f2a" />
  </svg>
);

/* ---------- data ---------- */

const LETTERS = 'ABCDEFGHIJKLMNOPQRSTUVW'.split('');
const widths = LETTERS.map(letter => {
  if (letter === 'B') return 98;
  if (letter === 'I') return 120;
  return 80;
});

const URL = 'https://ww';

// price | description | location | type | size | bedrooms | bathrooms | available | payment | down payment
const LISTINGS = `
8,000,000|OWN A|Swan Lake|Chalet|732 sqft / 6|1+ Maid|1|31-Aug-25|Cash|1,200,000 EGP
25,000,000|For sale,|Karmell, No|Villa|2,368 sqft|4|4|2-Sep-25|Cash|2,100,000 EGP
15,135,000|With a|Azha North|Chalet|1,270 sqft|2|2|19-Aug-25|Cash|1,513,000 EGP
12,652,000|Own an|Taj City, 5t|Apartment|1,787 sqft|3|2|26-Aug-25|Installments|1,260,000 EGP
45,250,000|Project:|Granville, N|Villa|4,306 sqft|7|7|2-Sep-25|Cash|2,262,500 EGP
19,760,000|Chalet|Marina 5, M|Chalet|1,356 sqft|3|2|26-Aug-25|Installments|988,000 EGP
9,000,000|Penthous|The Icon Re|Penthouse|2,820 sqft|4|5|3-Jul-25|Installments|
2,770,000|Stand-|Nyoum Oct|Villa|3,983 sqft|5+ Maid|5|26-Aug-25|Cash|
13,200,000|**La|La vista Ra|Twin Hous|2,368 sqft|3|3|25-Aug-25|Cash|
22,300,000|A 195-|Azad, 5th S|Duplex|2,099 sqft|3+ Maid|2|7-Aug-25|Installments|2,230,000 EGP
5,000,000|With|Jirian, New|iVilla|2,368 sqft|3+ Maid|4||Installments|
9,300,000|â€¢|Mangroovy|Chalet|807 sqft / 7|1+ Maid|2|31-Aug-25|Cash|
10,000,000|Fully|Almaza Bay|Apartment|1,507 sqft|2+ Maid|1|17-Jul-25|Cash|900,000 EGP
20,000,000|Luxury|Caesar, Qes|Chalet|1,722 sqft|3|3|2-Sep-25|Installments|
3,341,100|Looking|El Hadaba|Apartment|797 sqft / 7|1|1|30-Aug-25|Cash|1,002,330 EGP
18,000,000|Unit|Mangroovy|Duplex|1,378 sqft|2+ Maid|3|1-Sep-25|Cash|5,000,000 EGP
3,150,000|Taj City|Taj City, 5t|Apartment|689 sqft / 6|1|1|31-Aug-25|Cash|
29,310,000|Develope|Makadi Ora|Chalet|1,615 sqft|3+ Maid|4|1-Sep-25|Installments|11,724,000 EGP
14,127,000|Chalet for|Hacienda W|Chalet|775 sqft / 7|2|1|2-Sep-25|Installments|353,175 EGP
16,800,000|CAESAR|Caesar, Qes|Chalet|1,615 sqft|2+ Maid|3|31-Aug-25|Cash|100,000 EGP
9,000,000|Area :|Talala, New|Apartment|1,345 sqft|3|3|2-Sep-25|Installments|450,000 EGP
9,900,000|apartmen|Palm Parks|Apartment|1,830 sqft|3|3|31-Aug-25|Cash|
14,100,000|Solare|Solare, Ras|Chalet|1,076 sqft|2+ Maid|1|30-Jul-25|Cash|705,000 EGP
14,100,000|Chalet|The Med, R|Chalet|1,582 sqft|3+ Maid|3|1-Sep-25|Cash|
5,382,000|nnouncin|Al Ahyaa Di|Apartment|840 sqft / 7|1|1|7-May-25|Cash|538,200 EGP
11,530,000|Resale|Ivoire, Shei|Duplex|2,583 sqft|4|4|1-Sep-25|Cash|4,000,000 EGP
28,000,000|Own a|Solare, Ras|Twin Hous|2,013 sqft|3|3|31-Aug-25|Cash|1,400,000 EGP
3,500,000|Prime|Madinaty,|Apartment|484 sqft / 4|1|1|21-Aug-25|Installments|900,000 EGP
9,085,000|Apartmen|Bloomfield|Apartment|1,647 sqft|2|2|15-Jul-25|Cash|
4,200,000|RTM|Rock , Cal|Townhouse|3,229 sqft|2+ Maid|3|18-Aug-25|Cash|`
  .trim()
  .split('\n')
  .map(line => [URL, ...line.split('|')]);

const COLUMNS = [
  'url', 'price', 'description', 'location', 'type', 'size', 'bedrooms',
  'bathrooms', 'available_from', 'payment_m', 'down_payment',
];
const ROWS = [COLUMNS, ...LISTINGS];

const isRight = (row: number, col: number, value: string) => {
  if (row === 0) return false;
  return col === 1 || col === 7 || col === 8 || (col === 6 && /^\d+$/.test(value));
};
// long text runs over the next cell when that one is empty
const isSpill = (col: number, value: string, next?: string) =>
  (col === 10 && value !== '') || (col === 9 && value === 'Installments' && !next);

const trackOf = (row: number, col: number, value: string) => {
  if (row === 0) return col > 7 ? 0.62 : 0.45;
  if (col === 10) return -0.2;
  if (/^\d/.test(value)) return -0.08;
  if (value === 'Installments') return 0.42;
  return col === 4 ? 0.1 : 0.25;
};

const TABS: [string, number][] = [
  ['INSERT', 76],
  ['PAGE LAYOUT', 120],
  ['FORMULAS', 103],
  ['DATA', 68],
  ['REVIEW', 80],
  ['VIEW', 65],
];

const RibbonGroup = ({ name, w, left, launcher, children }: {
  name: string;
  w: number;
  left?: number;
  launcher?: boolean;
  children: ReactNode;
}) => (
  <Group $w={w}>
    <GroupBody $left={left}>{children}</GroupBody>
    <GroupFooter>
      <GroupName>{name}</GroupName>
      {launcher && <Launcher />}
    </GroupFooter>
  </Group>
);

const Big = ({ w, icon, top, bottom }: { w: number; icon: ReactNode; top: string; bottom?: string }) => (
  <BigButton $w={w}>
    <BigIcon>{icon}</BigIcon>
    <BigLine>{top}</BigLine>
    <BigLine>
      {bottom}
      <Caret />
    </BigLine>
  </BigButton>
);

const Small = ({ h, icon, label, caret }: { h: number; icon: ReactNode; label: string; caret?: number }) => (
  <SmallButton $h={h}>
    <SmallIcon>{icon}</SmallIcon>
    {label}
    {caret !== undefined && (
      <CaretBox $ml={caret}>
        <Caret />
      </CaretBox>
    )}
  </SmallButton>
);

function App() {
  return (
    <Window>
      <GlobalStyle />
      <Header>
        <CircuitArt />
        <TopStrip />
        <TitleBar>
          <Slot $w={24}><ExcelIcon /></Slot>
          <Slot $w={42}><SaveIcon /></Slot>
          <Slot $w={25}><UndoIcon color="#3a70b2" /></Slot>
          <Slot $w={11}><Caret /></Slot>
          <Slot $w={12} />
          <UndoIcon color="#b9b9b9" flip />
          <Slot $w={18}><Caret color="#bbb" /></Slot>
          <Slot $w={34}><CopyIcon /></Slot>
          <Slot $w={20}>
            <svg width="7" height="7" viewBox="0 0 7 7">
              <path d="M0 0h7v1H0zM0 3h7L3.500 7z" fill="#777" />
            </svg>
          </Slot>
          <Title>egypt_real_estate_listings.csv - Excel</Title>
          <WindowButtons>
            <Slot $w={33}><Glyph $size={15}>?</Glyph></Slot>
            <Slot $w={33}>
              <svg width="16" height="12" viewBox="0 0 16 12" fill="none" stroke="#666">
                <path d="M0.500 0.500h15v11H0.500zM0 2.500h16M8 11V5M5 7.500l3-3 3 3" />
              </svg>
            </Slot>
            <Slot $w={33}>
              <svg width="12" height="12" viewBox="0 0 12 12"><path d="M0 9h12v2H0z" fill="#666" /></svg>
            </Slot>
            <Slot $w={33}>
              <svg width="13" height="12" viewBox="0 0 13 12" fill="none" stroke="#666">
                <path d="M3.500 4V0.500h9v7H9M0.500 4.500h8.500v6.500H0.500zM3 1.500h9M0 5.500h9" />
              </svg>
            </Slot>
            <Slot $w={33}>
              <svg width="12" height="12" viewBox="0 0 12 12" stroke="#666" strokeWidth="2">
                <path d="M1 1l10 10M11 1 1 11" />
              </svg>
            </Slot>
          </WindowButtons>
        </TitleBar>
        <TabBar>
          <FileTab>FILE</FileTab>
          <Tab $w={70} $active>HOME</Tab>
          {TABS.map(([label, w]) => (
            <Tab key={label} $w={w}>{label}</Tab>
          ))}
          <Account>
            Microsoft account
            <Caret />
            <svg width="30" height="30" viewBox="0 0 30 30">
              <path d="M0 0h30v30H0z" fill="#b1b1b1" />
              <ellipse cx="14.500" cy="11" rx="6" ry="7" fill="#fff" />
              <path d="M3 30c0-8 2-11 7-12h9c5 1 7 4 7 12z" fill="#fff" />
            </svg>
          </Account>
        </TabBar>
      </Header>

      <Ribbon>
        <RibbonGroup name="Clipboard" w={188} launcher>
          <Big w={58} icon={<PasteIcon />} top="Paste" />
          <SmallColumn $w={129}>
            <Small h={28} icon={<CutIcon />} label="Cut" />
            <Small h={28} icon={<CopyIcon />} label="Copy" caret={11} />
            <Small h={28} icon={<PainterIcon />} label="Format Painter" />
          </SmallColumn>
        </RibbonGroup>

        <RibbonGroup name="Font" w={235} left={4} launcher>
          <Rows>
            <Row>
              <Combo $w={115}>Calibri<Caret /></Combo>
              <Combo $w={61}>11<Caret /></Combo>
              <Slot $w={30}><GrowFont /></Slot>
              <Slot $w={22}><GrowFont down /></Slot>
            </Row>
            <Row>
              <Slot $w={24}><Glyph $size={15}>B</Glyph></Slot>
              <Slot $w={30}><Glyph $size={17} $italic>I</Glyph></Slot>
              <Slot $w={20}><Glyph $size={15} $underline>U</Glyph></Slot>
              <Slot $w={20}><Caret /></Slot>
              <Slot $w={1} />
              <Line />
              <Slot $w={33}><BordersIcon /></Slot>
              <Slot $w={7}><Caret /></Slot>
              <Slot $w={7} />
              <Line />
              <Slot $w={35}><FillColorIcon /></Slot>
              <Slot $w={4}><Caret /></Slot>
              <Slot $w={35}><FontColorIcon /></Slot>
              <Slot $w={3}><Caret /></Slot>
            </Row>
          </Rows>
        </RibbonGroup>

        <RibbonGroup name="Alignment" w={344} left={4} launcher>
          <Rows>
            <Row>
              <Slot $w={26}><Lines rows={[[0, 0, 18], [3, 3, 12], [0, 6, 18]]} h={25} /></Slot>
              <Slot $w={26}><Lines rows={[[0, 4, 18], [3, 7, 12], [0, 10, 18], [3, 13, 12]]} /></Slot>
              <Slot $w={26} $bg="#9fd5b7">
                <Lines rows={[[0, 8, 18], [3, 11, 12], [0, 14, 18], [3, 17, 12]]} />
              </Slot>
              <Slot $w={4} />
              <Line />
              <Slot $w={34}><OrientationIcon /></Slot>
              <Slot $w={4}><Caret /></Slot>
              <Slot $w={8} />
              <Line />
              <Slot $w={34}><DirectionIcon /></Slot>
              <Slot $w={4}><Caret /></Slot>
            </Row>
            <Row>
              <Slot $w={26}><Lines w={14} rows={[[0, 3, 14], [0, 6, 10], [0, 9, 14], [0, 12, 10]]} /></Slot>
              <Slot $w={26}><Lines w={16} rows={[[0, 3, 16], [3, 6, 10], [0, 9, 16], [3, 12, 10]]} /></Slot>
              <Slot $w={26}><Lines w={14} rows={[[0, 3, 14], [4, 6, 10], [0, 9, 14], [4, 12, 10]]} /></Slot>
              <Slot $w={4} />
              <Line />
              <Slot $w={34}><IndentIcon out /></Slot>
              <Slot $w={18}><IndentIcon /></Slot>
            </Row>
          </Rows>
          <TallLine />
          <Rows>
            <Row><Slot $w={24}><WrapIcon /></Slot>Wrap Text</Row>
            <Row>
              <Slot $w={24}><MergeIcon /></Slot>
              Merge & Center
              <Slot $w={25}><Caret /></Slot>
            </Row>
          </Rows>
        </RibbonGroup>

        <RibbonGroup name="Number" w={161} left={4} launcher>
          <Rows>
            <Row><Combo $w={152}>General<Caret /></Combo></Row>
            <Row>
              <Slot $w={26}><Sign $size={18}>$</Sign></Slot>
              <Slot $w={12}><Caret /></Slot>
              <Slot $w={28}><Sign $size={18}>%</Sign></Slot>
              <Slot $w={22}>
                <svg width="7" height="10" viewBox="0 0 7 10">
                  <path d="M1 1.500C3-1 7 .5 6 4c-.5 3-2 5-5 6 1-1.500 2-2.500 2-4C0 6 0 3 1 1.500z" fill="#555" />
                </svg>
              </Slot>
              <Slot $w={7} />
              <Line />
              <Slot $w={34}><DecimalIcon /></Slot>
              <Slot $w={19}><DecimalIcon less /></Slot>
            </Row>
          </Rows>
        </RibbonGroup>

        <RibbonGroup name="Styles" w={453} left={6}>
          <Big w={84} icon={<ConditionalIcon />} top="Conditional" bottom="Formatting" />
          <Big w={73} icon={<TableIcon />} top="Format as" bottom="Table" />
          <Gallery>
            <Swatches>
              <Swatch $bg="#fff" $fg="#000" $on>Normal</Swatch>
              <Swatch $bg="#ffc7ce" $fg="#9c1a12">Bad</Swatch>
              <Swatch $bg="#c6efce" $fg="#006130">Good</Swatch>
              <Swatch $bg="#ffeb9c" $fg="#a86200">Neutral</Swatch>
            </Swatches>
            <GalleryButtons>
              <GalleryButton $h={25}>
                <svg width="6" height="4" viewBox="0 0 6 4"><path d="M0 4h6L3 0z" fill="#c0c0c0" /></svg>
              </GalleryButton>
              <GalleryButton $h={24}><Caret /></GalleryButton>
              <GalleryButton $h={24}>
                <svg width="7" height="7" viewBox="0 0 7 7"><path d="M0 0h7v1H0zM0 3h7L3.500 7z" fill="#666" /></svg>
              </GalleryButton>
            </GalleryButtons>
          </Gallery>
        </RibbonGroup>

        <RibbonGroup name="Cells" w={161} left={3}>
          <Big w={51} icon={<InsertIcon />} top="Insert" />
          <Big w={50} icon={<DeleteIcon />} top="Delete" />
          <Big w={52} icon={<FormatIcon />} top="Format" />
        </RibbonGroup>

        <RibbonGroup name="Editing" w={222} left={8}>
          <SmallColumn $w={102}>
            <Small h={26} icon={<SigmaIcon />} label="AutoSum" caret={11} />
            <Small h={27} icon={<FillDownIcon />} label="Fill" caret={5} />
            <Small h={27} icon={<EraserIcon />} label="Clear" caret={4} />
          </SmallColumn>
          <Big w={53} icon={<SortIcon />} top="Sort &amp;" bottom="Filter" />
          <Big w={52} icon={<BinocularsIcon />} top="Find &amp;" bottom="Select" />
        </RibbonGroup>
        <Collapse>
          <svg width="12" height="7" viewBox="0 0 12 7" fill="none" stroke="#666" strokeWidth="2">
            <path d="M1 6l5-5 5 5" />
          </svg>
        </Collapse>
      </Ribbon>

      <FormulaBar>
        <Box $w={102}>A1<Caret /></Box>
        <Dots>
          <svg width="2" height="10" viewBox="0 0 2 10" fill="#999">
            <path d="M0 0h2v2H0zM0 4h2v2H0zM0 8h2v2H0z" />
          </svg>
        </Dots>
        <FormulaButtons $w={110}>
          <svg width="15" height="14" viewBox="0 0 15 14" stroke="#bdbdbd" strokeWidth="2">
            <path d="M1 1l13 12M14 1 1 13" />
          </svg>
          <svg width="16" height="13" viewBox="0 0 16 13" fill="none" stroke="#bdbdbd" strokeWidth="2.600">
            <path d="M1 7l5 4.500L15 1" />
          </svg>
          <Fx>fx</Fx>
        </FormulaButtons>
        <FormulaInput>
          url
          <svg width="11" height="8" viewBox="0 0 11 8" fill="none" stroke="#666" strokeWidth="2.500">
            <path d="M1 1.500l4.500 4.500L10 1.500" />
          </svg>
        </FormulaInput>
      </FormulaBar>

      <SheetArea>
        <Sheet>
          <SheetRow>
            <Corner>
              <svg width="15" height="15" viewBox="0 0 15 15"><path d="M15 0v15H0z" fill="#dcdcdc" /></svg>
            </Corner>
            {LETTERS.map((letter, i) => (
              <ColumnName key={letter} $w={widths[i]} $on={i === 0}>{letter}</ColumnName>
            ))}
          </SheetRow>
          {ROWS.map((row, r) => (
            <SheetRow key={r}>
              <RowNumber $on={r === 0}>{r + 1}</RowNumber>
              {LETTERS.map((letter, c) => {
                const value = row[c] || '';
                return (
                  <Cell
                    key={letter}
                    $w={widths[c]}
                    $track={trackOf(r, c, value)}
                    $right={isRight(r, c, value)}
                    $spill={isSpill(c, value, row[c + 1])}
                  >
                    {value}
                  </Cell>
                );
              })}
            </SheetRow>
          ))}
        </Sheet>
        <VScroll>
          <ScrollButton><Triangle dir={0} /></ScrollButton>
          <VThumb />
          <ScrollButton><Triangle dir={180} /></ScrollButton>
        </VScroll>
      </SheetArea>
      <Selection />

      <SheetTabs>
        <SheetNav>
          <svg width="6" height="10" viewBox="0 0 6 10"><path d="M6 0v10L0 5z" fill="#c3c3c3" /></svg>
          <svg width="6" height="10" viewBox="0 0 6 10"><path d="M0 0v10l6-5z" fill="#c3c3c3" /></svg>
        </SheetNav>
        <SheetTab>egypt_real_estate_listings</SheetTab>
        <AddSheet>
          <svg width="21" height="21" viewBox="0 0 21 21" fill="none" stroke="#777">
            <circle cx="10.500" cy="10.500" r="9.500" strokeWidth="1.300" />
            <path d="M10.500 5.500v10M5.500 10.500h10" strokeWidth="2" />
          </svg>
        </AddSheet>
        <HScroll>
          <Slot $w={34}>
            <svg width="2" height="11" viewBox="0 0 2 11" fill="#999">
              <path d="M0 0h2v2H0zM0 4h2v2H0zM0 8h2v2H0z" />
            </svg>
          </Slot>
          <ScrollButton><Triangle dir={-90} /></ScrollButton>
          <HThumb />
          <HTrack />
          <ScrollButton><Triangle dir={90} /></ScrollButton>
        </HScroll>
      </SheetTabs>

      <StatusBar>
        READY
        <StatusTools>
          <Slot $w={41} $bg="#0f6634">
            <svg width="14" height="13" viewBox="0 0 14 13" fill="none" stroke="#fff">
              <path d="M0.500 0.500h12v12H0.500zM4.500 0v13M8.500 0v13M0 4.500h13M0 8.500h13" />
            </svg>
          </Slot>
          <Slot $w={41}>
            <svg width="14" height="13" viewBox="0 0 14 13" fill="none" stroke="#fff">
              <path d="M0.500 0.500h13v12H0.500zM3.500 2.500h7v8h-7zM5 4.500h4M5 6.500h4M5 8.500h4" />
            </svg>
          </Slot>
          <Slot $w={41}>
            <svg width="14" height="13" viewBox="0 0 14 13" fill="none" stroke="#fff">
              <path d="M0.500 0.500h13v12H0.500z" />
              <path d="M1 1h3v7H1zM5 1h4v7H5z" fill="#fff" stroke="none" />
            </svg>
          </Slot>
          <svg width="160" height="15" viewBox="1704 0 160 15" fill="#fff">
            <path d="M1710 6h9v3h-9zM1723 7h125v1h-125zM1783 1h5v13h-5zM1852 6h12v3h-12zM1856.500 2h3v11h-3z" />
          </svg>
          <ZoomValue>100%</ZoomValue>
        </StatusTools>
      </StatusBar>

      <Taskbar>
        <TaskItem $w={60}><StartIcon /></TaskItem>
        <TaskItem $w={62}><SearchIcon /></TaskItem>
        <TaskItem $w={63}><CopilotIcon /></TaskItem>
        <TaskItem $running><ExplorerIcon /></TaskItem>
        <TaskItem><VlcIcon /></TaskItem>
        <TaskItem $w={66}><WhatsappIcon /></TaskItem>
        <TaskItem $w={56}><SnipIcon /></TaskItem>
        <TaskItem $w={66}><ChromeProfileIcon /></TaskItem>
        <TaskItem $w={60}><AcadIcon /></TaskItem>
        <TaskItem $running><ChromeIcon badge="#3d3158" /></TaskItem>
        <TaskItem $running><CalcIcon /></TaskItem>
        <TaskItem $running $w={63}><ChromeIcon badge="#1797a6" letter="H" /></TaskItem>
        <TaskItem $running><PythonIcon /></TaskItem>
        <TaskItem $running><ChromeIcon badge="#12847a" letter="H" /></TaskItem>
        <TaskItem $running $active $w={61}><ExcelIcon size={27} /></TaskItem>
        <TaskItem $running><TeamsIcon /></TaskItem>
        <TaskItem $running><PdfIcon /></TaskItem>
        <TaskItem $running><PowerpointIcon /></TaskItem>
        <TaskItem $running $w={63}><ChromeIcon badge="#ec6c1c" letter="H" /></TaskItem>
        <Tray>
          <Weather>
            <WeatherIcon />
            <Temperature>19°C</Temperature>
            <Condition dir="rtl">صافٍ غالبًا</Condition>
          </Weather>
          <Slot $w={40}>
            <svg width="16" height="9" viewBox="0 0 16 9" fill="none" stroke="#fff" strokeWidth="1.500">
              <path d="M1 8l7-7 7 7" />
            </svg>
          </Slot>
          <Slot $w={20}>
            <svg width="17" height="16" viewBox="0 0 17 16" fill="none" stroke="#c8cccb" strokeWidth="1.400">
              <path d="M1 14C1 7 7 1 16 1M4.500 15C4.500 9 9 4.500 16 4.500M8.500 15c0-4 3-7 7.500-7" />
              <path d="M12 15c0-2 2-4 4-4" stroke="#fff" />
              <circle cx="15" cy="14" r="1.500" fill="#fff" stroke="none" />
            </svg>
          </Slot>
          <Slot $w={41}>
            <svg width="19" height="12" viewBox="0 0 19 12" fill="none" stroke="#fff">
              <path d="M0.500 0.500h16v11H0.500zM17 4h1.500v4H17" />
              <path d="M2.500 2.500h8v7h-8z" fill="#fff" />
            </svg>
          </Slot>
          <Slot $w={18}>
            <svg width="21" height="18" viewBox="0 0 21 18" fill="none" stroke="#fff" strokeWidth="1.200">
              <path d="M1 6h3l4-4v14l-4-4H1zM11 6c1.500 2 1.500 4 0 6M14 4c3 3 3 7 0 10M17 2c4 4 4 10 0 14" />
            </svg>
          </Slot>
          <Slot $w={52}>
            <svg width="30" height="17" viewBox="0 0 30 17" fill="none" stroke="#fff">
              <path d="M0.500 0.500h29v16H0.500z" />
              <path d="M4 4.500h23M4 8.500h23" strokeDasharray="1.500 1.500" />
              <path d="M4 12.500h3M9 12.500h12M23 12.500h3" />
            </svg>
          </Slot>
          <Slot $w={34}>ENG</Slot>
          <Clock>
            7:10 PM
            <br />
            3/29/2026
          </Clock>
          <Notifications>
            <svg width="34" height="32" viewBox="0 0 34 32">
              <path d="M1 1h20v17H8l-4 4v-4H1z" fill="#fff" />
              <path d="M4 5.500h14M4 9.500h14M4 13.500h8" stroke="#243130" strokeWidth="1.500" />
              <Badge cx={21} cy={20.500} r={9.500} text="3" fill="#1f4258" />
            </svg>
          </Notifications>
          <ShowDesktop />
        </Tray>
      </Taskbar>

      <Watermark>
        <WatermarkName>مستقل</WatermarkName>
        <WatermarkHost>mostaql.com</WatermarkHost>
      </Watermark>
    </Window>
  );
}

export default App;
